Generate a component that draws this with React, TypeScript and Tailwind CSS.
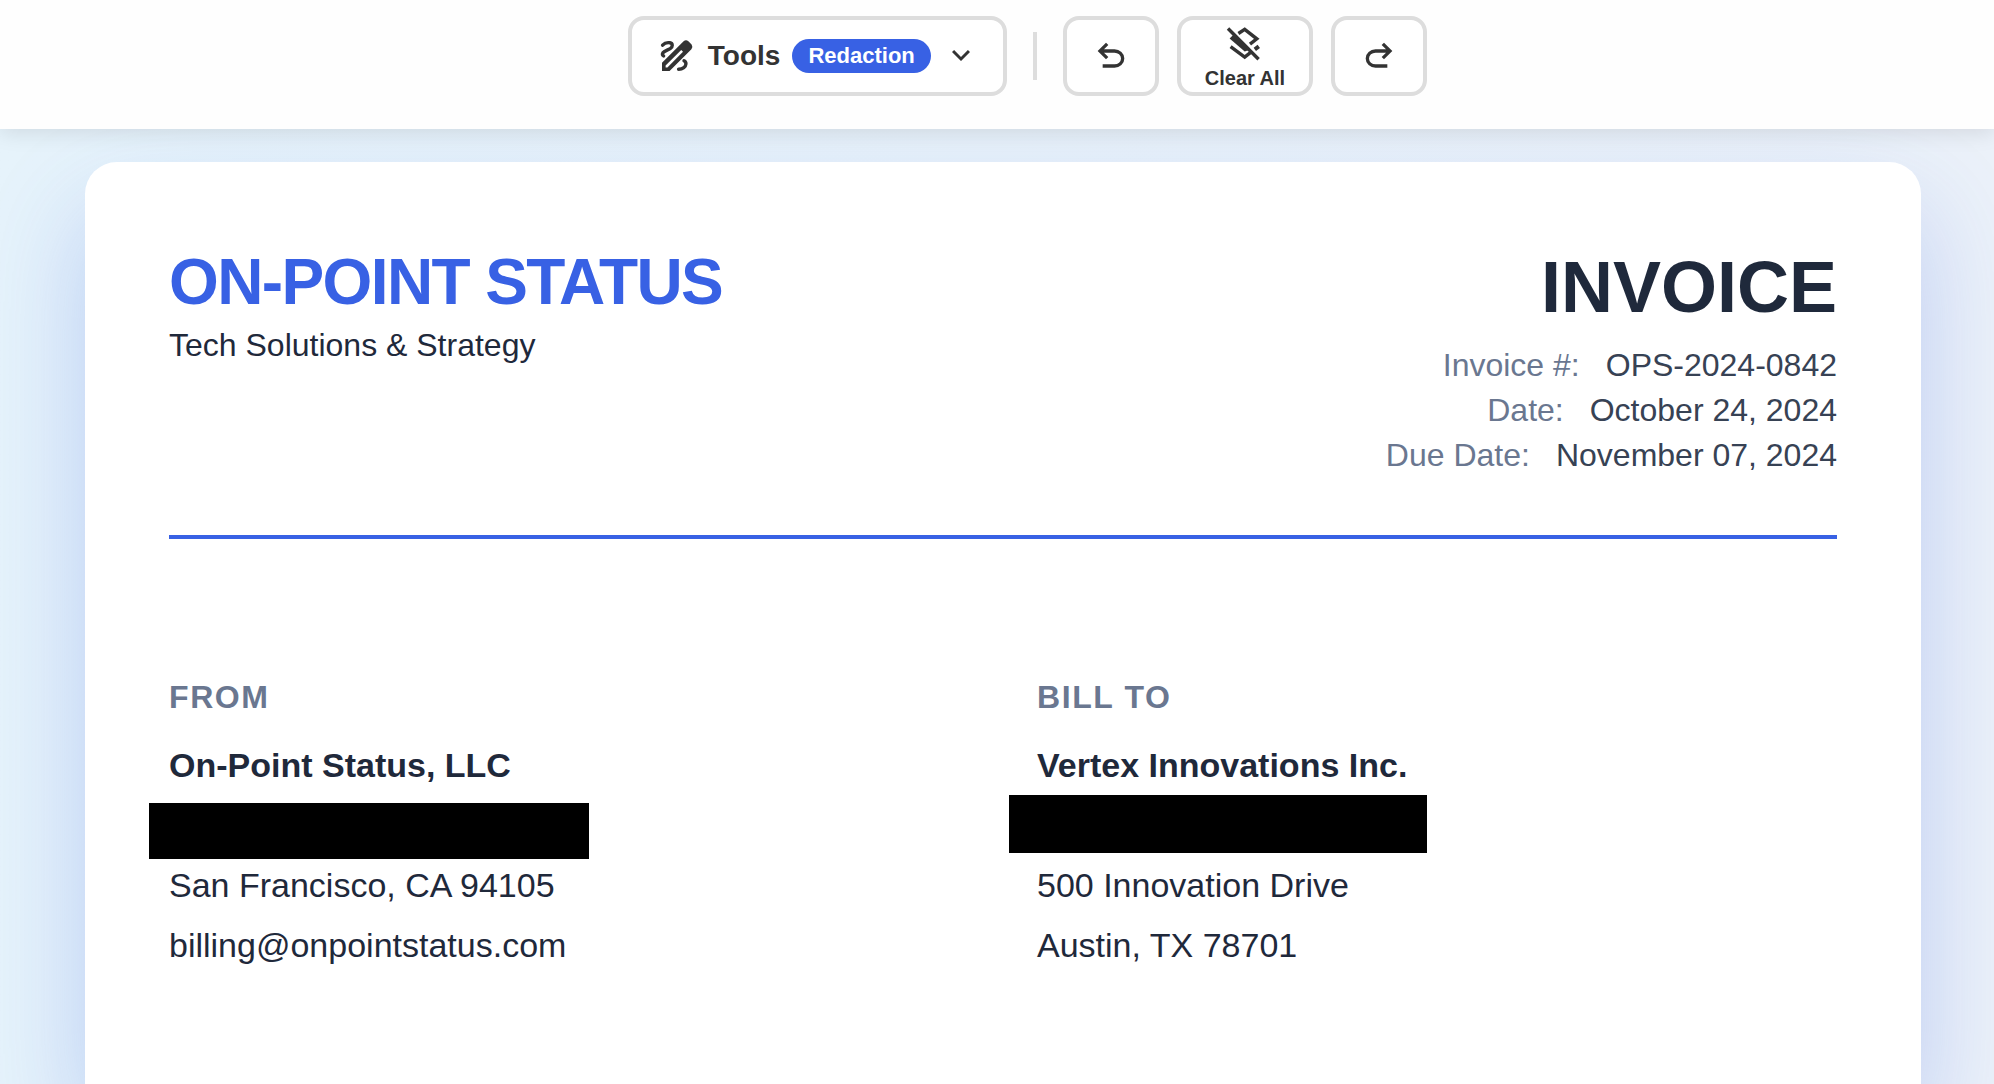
import type { ReactNode } from "react";

// ── Data ──────────────────────────────────────────────────────────────────────

const META = [
  { label: "Invoice #:", value: "OPS-2024-0842" },
  { label: "Date:",      value: "October 24, 2024" },
  { label: "Due Date:",  value: "November 07, 2024" },
];

// ── Icons ─────────────────────────────────────────────────────────────────────

function SymbolIcon({ d, className }: { d: string; className: string }) {
  return (
    <svg viewBox="0 -960 960 960" fill="currentColor" className={className} aria-hidden="true">
      <path d={d} />
    </svg>
  );
}

const UNDO = "M280-200v-80h284q63 0 109.5-40T720-420q0-60-46.5-100T564-560H312l104 104-56 56-200-200 200-200 56 56-104 104h252q97 0 166.5 63T800-420q0 94-69.5 157T564-200H280Z";
const REDO = "M396-200q-97 0-166.5-63T160-420q0-94 69.5-157T396-640h252L544-744l56-56 200 200-200 200-56-56 104-104H396q-63 0-109.5 40T240-420q0 60 46.5 100T396-280h284v80H396Z";
const CHEVRON = "M480-344 240-584l56-56 184 184 184-184 56 56-240 240Z";

function DrawIcon() {
  return (
    <svg viewBox="0 0 40 40" className="size-10" fill="none" stroke="currentColor" strokeWidth="3.4" strokeLinecap="round" aria-hidden="true">
      <path d="M6.6 9.2C8.4 7.2 11.4 6.4 13.8 6.8C17 7.4 17 10.8 14.2 12.6C11.6 14.2 8.2 14.8 6.9 16.8C6.1 18.2 6.5 19.2 7.6 20" />
      <path d="M28 24.8C30.8 26.2 30.4 29.6 27.8 31.6C26.2 32.8 24.4 33.2 22.6 33.2" />
      <path
        d="M6 35V26.8L27.6 5.2Q30 3.4 32.4 5.2L35.6 8.4Q37.2 10.8 35.4 13.2L13.6 35ZM9.6 31.4H11.4L27 15.8L25.2 14L9.6 29.6Z"
        fill="currentColor"
        fillRule="evenodd"
        stroke="none"
      />
    </svg>
  );
}

function LayersClearIcon() {
  return (
    <svg viewBox="0 0 40 40" className="size-10" fill="none" stroke="currentColor" strokeWidth="3.4" aria-hidden="true">
      <path d="M3 6.5 33.6 37.2" />
      <path d="M13.4 11.5 19.7 7.4 31.8 16.8 25 22.2" />
      <path d="M5.6 24.6 19.7 35 25.4 30.6" />
      <path d="M29.8 27.4 33.8 24.4" strokeWidth="4" />
      <path d="M4.6 16.6 9.6 11.6 25.4 27.4 19.7 29.4Z" fill="currentColor" stroke="none" />
    </svg>
  );
}

// ── Toolbar ───────────────────────────────────────────────────────────────────

function ToolbarButton({ label, children }: { label?: string; children: ReactNode }) {
  return (
    <button
      type="button"
      aria-label={label}
      className="flex h-20 flex-col items-center justify-center gap-1 rounded-2xl border-4 border-[#dddddd] bg-white px-6"
    >
      {children}
    </button>
  );
}

function Toolbar() {
  return (
    <header className="relative z-10 flex justify-center gap-[18px] bg-[#fefefe] pt-4 pb-[33px] pl-[61px] text-[#333333] shadow-[0_4px_20px_rgba(0,0,0,0.1)]">
      <button
        type="button"
        className="flex h-20 items-center gap-3 rounded-2xl border-4 border-[#dddddd] bg-white px-6 font-bold"
      >
        <DrawIcon />
        <span className="text-[28px] leading-8">Tools</span>
        <span className="rounded-full bg-[#3861e4] px-4 py-1 text-[22px] leading-[26px] text-white">
          Redaction
        </span>
        <SymbolIcon d={CHEVRON} className="size-9" />
      </button>

      <div className="mx-2 my-4 w-1 bg-[#dddddd]" />

      <ToolbarButton label="Undo">
        <SymbolIcon d={UNDO} className="size-10" />
      </ToolbarButton>
      <ToolbarButton>
        <LayersClearIcon />
        <span className="text-[20px] leading-6 font-bold">Clear All</span>
      </ToolbarButton>
      <ToolbarButton label="Redo">
        <SymbolIcon d={REDO} className="size-10" />
      </ToolbarButton>
    </header>
  );
}

// ── Invoice ───────────────────────────────────────────────────────────────────

function Party({ title, name, mask, lines }: {
  title: string;
  name: string;
  mask: string;
  lines: string[];
}) {
  return (
    <section className="text-[34px] leading-[60px]">
      <h2 className="mb-[18px] text-[32px] leading-10 font-bold tracking-wider text-[#6a7790]">{title}</h2>
      <p className="font-bold">{name}</p>
      {/* Redacted address line */}
      <div className="relative h-15">
        <div className={`absolute bg-black ${mask}`} />
      </div>
      {lines.map((line) => <p key={line}>{line}</p>)}
    </section>
  );
}

export default function App() {
  return (
    <div className="flex min-h-screen flex-col bg-linear-to-r from-[#e6f3fb] to-[#ebf1f9] font-['Liberation_Sans',Arial,sans-serif]">
      <Toolbar />

      <main className="flex flex-1 overflow-hidden pt-[33px] pr-[73px] pl-[85px]">
        <article className="flex-1 rounded-t-[32px] bg-white pt-20 pr-[84px] pl-[84px] text-[#1f293b] shadow-[0_50px_100px_rgba(56,97,228,0.25)]">
          <div className="flex justify-between border-b-4 border-[#3861e4] pb-[57px]">
            <div>
              <h1 className="text-[64px] leading-[80px] font-bold tracking-tight text-[#3861e4]">ON-POINT STATUS</h1>
              <p className="text-[32px] leading-[46px]">Tech Solutions &amp; Strategy</p>
            </div>
            <div className="text-right">
              <h2 className="mb-[11px] text-[72px] leading-[90px] font-bold">INVOICE</h2>
              {META.map(({ label, value }) => (
                <p key={label} className="text-[32px] leading-[45px] text-[#374254]">
                  <span className="mr-[26px] text-[#6a7790]">{label}</span>
                  {value}
                </p>
              ))}
            </div>
          </div>

          <div className="grid grid-cols-2 gap-[68px] pt-[138px]">
            <Party
              title="FROM"
              name="On-Point Status, LLC"
              mask="-left-5 top-2 h-14 w-[440px]"
              lines={["San Francisco, CA 94105", "billing@onpointstatus.com"]}
            />
            <Party
              title="BILL TO"
              name="Vertex Innovations Inc."
              mask="-left-7 top-0 h-[58px] w-[418px]"
              lines={["500 Innovation Drive", "Austin, TX 78701"]}
            />
          </div>
        </article>
      </main>
    </div>
  );
}
